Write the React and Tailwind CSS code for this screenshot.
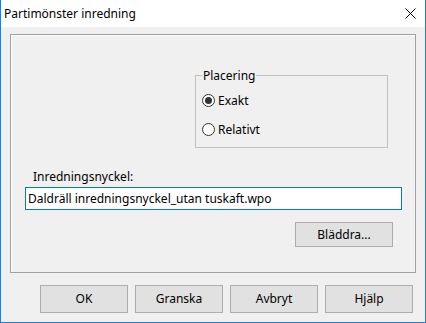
import React from "react";

const font = { fontFamily: '"Noto Sans", "Segoe UI", sans-serif' };

function Radio({ checked, label, className = "" }) {
  return (
    <div className={"flex items-center h-[15px] " + className}>
      <div className="w-[13px] h-[13px] rounded-full border border-[#333333] bg-white flex items-center justify-center">
        {checked && <div className="w-[7px] h-[7px] rounded-full bg-[#333333]" />}
      </div>
      <span className="ml-[3px] text-[12px] leading-[15px] text-black">{label}</span>
    </div>
  );
}

function Btn({ children, className = "" }) {
  return (
    <div
      className={
        "flex items-center justify-center bg-[#e1e1e1] border border-[#adadad] text-[12px] text-black " +
        className
      }
    >
      {children}
    </div>
  );
}

export default function App() {
  return (
    <div
      style={font}
      className="w-[426px] h-[323px] flex flex-col border-x border-b border-[#1883d7] bg-[#f0f0f0]"
    >
      <div className="h-[27px] bg-white flex items-center justify-between pl-[3px] pr-[9px]">
        <span className="text-[12px] text-black leading-none">Partimönster inredning</span>
        <svg width="11" height="11" viewBox="0 0 11 11">
          <path d="M0.5 0.5 L10.5 10.5 M10.5 0.5 L0.5 10.5" stroke="#000" strokeWidth="1" />
        </svg>
      </div>
      <div className="flex-1 flex flex-col pt-[7px] px-[9px]">
        <div className="h-[239px] border border-[#a0a0a0] shadow-[inset_1px_1px_0_#ffffff] flex flex-col pl-[14px]">
          <fieldset className="ml-[170px] mt-[33px] w-[193px] h-[80px] border border-[#c0c0c0] pl-[6px]">
            <legend className="px-[1px] text-[12px] leading-[15px] text-black">Placering</legend>
            <Radio checked label="Exakt" className="mt-[10px]" />
            <Radio label="Relativt" className="mt-[14px]" />
          </fieldset>
          <div className="mt-[21px] ml-[8px] text-[12px] leading-[15px] text-black">Inredningsnyckel:</div>
          <div className="mt-[3px] w-[377px] h-[23px] border border-[#0078d7] bg-white flex items-center pl-[2px] text-[12px] text-black">
            Daldräll inredningsnyckel_utan tuskaft.wpo
          </div>
          <div className="flex pl-[270px] mt-[12px]">
            <Btn className="w-[98px] h-[25px]">Bläddra...</Btn>
          </div>
        </div>
        <div className="flex justify-end gap-[7px] mt-[12px] pr-[3px]">
          <Btn className="w-[88px] h-[28px]">OK</Btn>
          <Btn className="w-[88px] h-[28px]">Granska</Btn>
          <Btn className="w-[88px] h-[28px]">Avbryt</Btn>
          <Btn className="w-[88px] h-[28px]">Hjälp</Btn>
        </div>
      </div>
    </div>
  );
}
